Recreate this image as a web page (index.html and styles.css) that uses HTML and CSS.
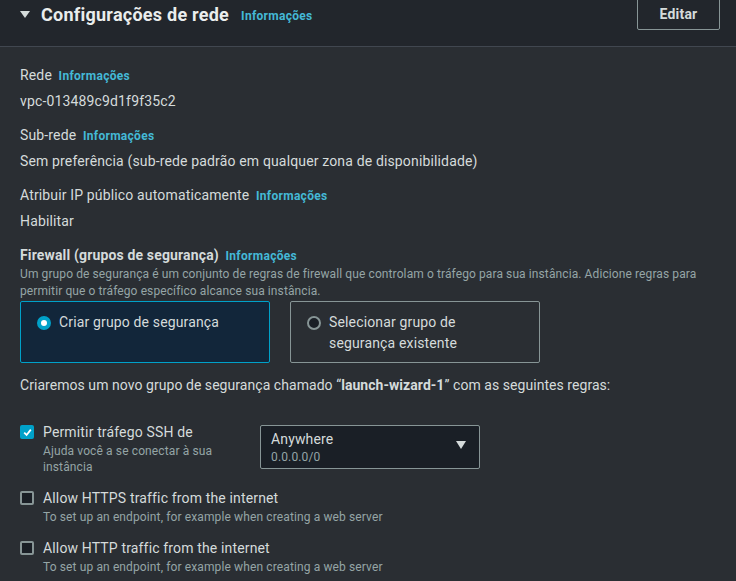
FILE: index.html
```html
<!DOCTYPE html>
<html lang="pt">
<head>
<meta charset="utf-8">
<link rel="stylesheet" href="styles.css">
</head>
<body>
<div class="panel">
  <div class="header">
    <div class="title-wrap">
      <svg class="caret" width="10" height="7" viewBox="0 0 10 7"><path d="M0 0 H10 L5 7 Z" fill="#d5dbdb"/></svg>
      <h2 class="title">Configurações de rede</h2>
      <a class="info">Informações</a>
    </div>
    <button class="btn">Editar</button>
  </div>
  <div class="body">
    <div class="field">
      <div class="label">Rede <a class="info">Informações</a></div>
      <div class="value">vpc-013489c9d1f9f35c2</div>
    </div>
    <div class="field">
      <div class="label">Sub-rede <a class="info">Informações</a></div>
      <div class="value">Sem preferência (sub-rede padrão em qualquer zona de disponibilidade)</div>
    </div>
    <div class="field">
      <div class="label">Atribuir IP público automaticamente <a class="info">Informações</a></div>
      <div class="value">Habilitar</div>
    </div>
    <div class="field fw">
      <div class="label strong">Firewall (grupos de segurança) <a class="info">Informações</a></div>
      <div class="desc">Um grupo de segurança é um conjunto de regras de firewall que controlam o tráfego para sua instância. Adicione regras para permitir que o tráfego específico alcance sua instância.</div>
      <div class="cards">
        <div class="card selected">
          <span class="radio on"></span>
          <span class="card-text">Criar grupo de segurança</span>
        </div>
        <div class="card">
          <span class="radio"></span>
          <span class="card-text">Selecionar grupo de segurança existente</span>
        </div>
      </div>
      <div class="note">Criaremos um novo grupo de segurança chamado “<b>launch-wizard-1</b>” com as seguintes regras:</div>
      <div class="rule ssh">
        <div class="check-item narrow">
          <span class="box on"><svg width="13" height="13" viewBox="0 0 13 13"><path d="M3.2 6.6 L5.6 9 L9.8 3.6" fill="none" stroke="#fff" stroke-width="1.8"/></svg></span>
          <div class="check-text">
            <div class="check-label">Permitir tráfego SSH de</div>
            <div class="check-desc">Ajuda você a se conectar à sua instância</div>
          </div>
        </div>
        <div class="select">
          <div class="sel-text">
            <div class="sel-main">Anywhere</div>
            <div class="sel-sub">0.0.0.0/0</div>
          </div>
          <svg class="sel-caret" width="10" height="8" viewBox="0 0 10 8"><path d="M0 0 H10 L5 8 Z" fill="#d5dbdb"/></svg>
        </div>
      </div>
      <div class="rule">
        <div class="check-item">
          <span class="box"></span>
          <div class="check-text">
            <div class="check-label">Allow HTTPS traffic from the internet</div>
            <div class="check-desc">To set up an endpoint, for example when creating a web server</div>
          </div>
        </div>
      </div>
      <div class="rule">
        <div class="check-item">
          <span class="box"></span>
          <div class="check-text">
            <div class="check-label">Allow HTTP traffic from the internet</div>
            <div class="check-desc">To set up an endpoint, for example when creating a web server</div>
          </div>
        </div>
      </div>
    </div>
  </div>
</div>
</body>
</html>
```

FILE: styles.css
```css
* { box-sizing: border-box; }
html, body { margin: 0; padding: 0; }
body {
  background: #2a2e33;
  font-family: Roboto, "Liberation Sans", sans-serif;
  color: #d5dbdb;
  width: 736px;
  height: 581px;
  overflow: hidden;
  letter-spacing: 0.15px;
}
.panel { background: #2a2e33; }
.header {
  background: #22262c;
  height: 47px;
  border-bottom: 1px solid #414750;
  display: flex;
  justify-content: space-between;
  align-items: flex-start;
  padding: 0 16px 0 20px;
}
.title-wrap {
  display: flex;
  align-items: center;
  height: 30px;
}
.caret { margin-right: 11px; margin-top: -2px; }
.title {
  margin: 0;
  font-size: 18px;
  font-weight: 700;
  color: #eaeded;
  line-height: 22px;
  letter-spacing: 0.25px;
}
.info {
  color: #44b9d6;
  font-size: 12px;
  font-weight: 700;
  margin-left: 8px;
  letter-spacing: 0.3px;
}
.title-wrap .info { margin-left: 12px; margin-top: 2px; }
.btn {
  margin-top: -6px;
  height: 36px;
  width: 83px;
  background: transparent;
  border: 1px solid #879596;
  border-radius: 2px;
  color: #d5dbdb;
  font-family: inherit;
  font-size: 14px;
  font-weight: 700;
  padding: 4px 0 0;
  letter-spacing: 0.2px;
}
.body { padding: 18px 20px 0; }
.field { margin-bottom: 14px; }
.label {
  font-size: 14px;
  line-height: 20px;
  color: #d5dbdb;
}
.label .info { margin-left: 3px; }
.label.strong { font-weight: 700; }
.value {
  margin-top: 5px;
  font-size: 14px;
  line-height: 20px;
}
.desc {
  font-size: 12px;
  line-height: 17px;
  color: #95a5a6;
  letter-spacing: 0.1px;
}
.cards {
  display: flex;
  gap: 20px;
  margin-top: 1px;
}
.card {
  width: 250px;
  height: 62px;
  border: 1px solid #879596;
  border-radius: 2px;
  display: flex;
  align-items: flex-start;
  padding: 10px 16px;
  gap: 8px;
}
.card.selected {
  border-color: #00a1c9;
  background: #12263a;
}
.card-text {
  font-size: 14px;
  line-height: 21px;
  width: 170px;
}
.radio {
  flex: none;
  width: 14px;
  height: 14px;
  border-radius: 50%;
  border: 2px solid #879596;
  background: #1a1f26;
  margin-top: 4px;
}
.radio.on {
  border: 4px solid #00a1c9;
  background: #fff;
}
.note {
  margin-top: 12px;
  font-size: 14px;
  line-height: 20px;
  letter-spacing: 0.05px;
}
.rule {
  display: flex;
  align-items: flex-start;
  gap: 20px;
  margin-top: 13px;
}
.rule.ssh { margin-top: 27px; }
.check-item {
  display: flex;
  align-items: flex-start;
  gap: 9px;
}
.check-item.narrow { width: 220px; }
.box {
  flex: none;
  width: 14px;
  height: 14px;
  border: 2px solid #879596;
  border-radius: 2px;
  background: #1a1f26;
  margin-top: 3px;
  display: flex;
  align-items: center;
  justify-content: center;
}
.box.on {
  border: none;
  background: #00a1c9;
}
.check-label {
  font-size: 14px;
  line-height: 20px;
}
.check-desc {
  font-size: 12px;
  line-height: 16px;
  color: #95a5a6;
  margin-top: 1px;
  letter-spacing: 0.12px;
}
.select {
  margin-top: 3px;
  width: 220px;
  height: 44px;
  border: 1px solid #879596;
  border-radius: 2px;
  background: #1a1f26;
  display: flex;
  align-items: center;
  justify-content: space-between;
  padding: 0 13px 0 10px;
}
.sel-main { font-size: 14px; line-height: 18px; }
.sel-sub { font-size: 12px; line-height: 16px; color: #95a5a6; margin-top: 1px; }
.sel-caret { margin-top: -4px; }
```
